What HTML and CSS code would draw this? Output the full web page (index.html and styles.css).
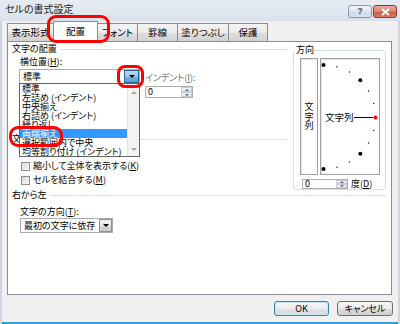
FILE: index.html
```html
<!DOCTYPE html>
<html lang="ja">
<head>
<meta charset="utf-8">
<title>セルの書式設定</title>
<link rel="stylesheet" href="styles.css">
</head>
<body>
<div class="window">
  <div class="titlebar">
    <span class="title">セルの書式設定</span>
    <div class="caps">
      <span class="cap help">?</span>
      <span class="cap close"><svg width="11" height="8" viewBox="0 0 11 8"><path d="M2 1 L9 7 M9 1 L2 7" stroke="#fff" stroke-width="2"/></svg></span>
    </div>
  </div>
  <div class="tabs">
    <div class="tab t1">表示形式</div>
    <div class="tab t2 active">配置</div>
    <div class="tab t3">フォント</div>
    <div class="tab t4">罫線</div>
    <div class="tab t5">塗りつぶし</div>
    <div class="tab t6">保護</div>
  </div>
  <div class="panel">
    <div class="cols">
      <div class="left">
        <div class="ghead"><span>文字の配置</span></div>
        <div class="flabel">横位置(<u>H</u>):</div>
        <div class="row1">
          <div class="combo c1"><span class="ctext">標準</span><span class="cbtn hot"><i class="arrow"></i></span></div>
          <div class="indent">
            <div class="dlabel">インデント(<u>I</u>):</div>
            <div class="spin s1"><span class="sval">0</span><span class="sbtns"><i class="up"></i><i class="dn"></i></span></div>
          </div>
        </div>
        <div class="ghead g2"><span>文字の制御</span></div>
        <label class="check k1"><i class="box"></i>縮小して全体を表示する(<u>K</u>)</label>
        <label class="check k2"><i class="box"></i>セルを結合する(<u>M</u>)</label>
      </div>
      <div class="orient">
        <div class="otitle">方向</div>
        <div class="obody">
          <div class="vbox"><span>文</span><span>字</span><span>列</span></div>
          <div class="dial">
            <svg width="58" height="115" viewBox="0 0 58 115">
              <g fill="#000">
                <circle cx="2.5" cy="6" r="2"/>
                <rect x="15.4" y="7.2" width="1.2" height="1.2"/>
                <rect x="27.9" y="12.4" width="1.2" height="1.2"/>
                <circle cx="39.3" cy="21.2" r="2"/>
                <rect x="46.9" y="31.4" width="1.2" height="1.2"/>
                <rect x="52.1" y="43.9" width="1.2" height="1.2"/>
                <rect x="52.1" y="70.9" width="1.2" height="1.2"/>
                <rect x="46.9" y="83.4" width="1.2" height="1.2"/>
                <circle cx="39.3" cy="94.8" r="2"/>
                <rect x="27.9" y="102.4" width="1.2" height="1.2"/>
                <rect x="15.4" y="107.6" width="1.2" height="1.2"/>
                <circle cx="2.5" cy="110" r="2"/>
              </g>
              <text x="4" y="61.5" class="dialtext">文字列</text>
              <line x1="33" y1="58.5" x2="52" y2="58.5" stroke="#000" stroke-width="1"/>
              <circle cx="54.5" cy="58.5" r="2" fill="#f00"/>
            </svg>
          </div>
        </div>
        <div class="orow">
          <div class="spin s2"><span class="sval">0</span><span class="sbtns"><i class="up"></i><i class="dn"></i></span></div>
          <span class="deg">度(<u>D</u>)</span>
        </div>
      </div>
    </div>
    <div class="ghead g3"><span>右から左</span></div>
    <div class="flabel f2">文字の方向(<u>T</u>):</div>
    <div class="combo c2"><span class="ctext">最初の文字に依存</span><span class="cbtn"><i class="arrow"></i></span></div>
  </div>
  <div class="footer">
    <button class="btn ok">OK</button>
    <button class="btn cancel">キャンセル</button>
  </div>

  <div class="droplist">
    <div class="litems">
      <div class="li">標準</div>
      <div class="li">左詰め (インデント)</div>
      <div class="li">中央揃え</div>
      <div class="li">右詰め (インデント)</div>
      <div class="li">繰り返し</div>
      <div class="li sel">両端揃え</div>
      <div class="li">選択範囲内で中央</div>
      <div class="li">均等割り付け (インデント)</div>
    </div>
    <div class="lsb"><i class="sup"></i><i class="sdn"></i></div>
  </div>

  <div class="mark m1"></div>
  <div class="mark m2"></div>
  <div class="mark m3"></div>
</div>
</body>
</html>
```

FILE: styles.css
```css
* { box-sizing: border-box; margin: 0; padding: 0; }
html, body { width: 400px; height: 324px; overflow: hidden; }
body {
  font-family: "Noto Sans CJK JP", "Noto Sans", sans-serif;
  font-size: 9px;
  font-feature-settings: "palt";
  color: #000;
  background: #f0f0f0;
}
u { text-decoration-thickness: 1px; text-underline-offset: 1px; }

.window {
  position: relative;
  width: 400px;
  height: 324px;
  display: flex;
  flex-direction: column;
  padding: 0 2px 2px;
  background: #f0f0f0;
  box-shadow: inset 2px 0 #cdd5de, inset -2px 0 #cdd5de, inset 0 -2px #3a9ad9;
}

/* title bar */
.titlebar {
  flex: none;
  height: 21px;
  margin: 0 -2px;
  padding: 3px 3px 0 5px;
  display: flex;
  justify-content: space-between;
  align-items: flex-start;
  background: linear-gradient(#e6ecf3, #d9e2ec);
}
.title { font-size: 10px; line-height: 12px; color: #1e1e1e; }
.caps { display: flex; gap: 1px; margin-top: 2px; }
.cap { width: 24px; height: 13px; border: 1px solid; border-radius: 3px; }
.help {
  border-color: #8694a8;
  background: linear-gradient(#f3f6fa, #dde5ef 50%, #cbd7e6 51%, #d9e3ef);
  color: #3b4b62;
  font-family: "Liberation Sans", sans-serif;
  font-weight: bold;
  font-size: 9px;
  line-height: 11px;
  text-align: center;
}
.close {
  border-color: #8c3a30;
  background: linear-gradient(#eaa99e, #d98471 50%, #c55a44 51%, #d47d66);
  display: flex;
  align-items: center;
  justify-content: center;
}

/* tabs */
.tabs {
  flex: none;
  height: 20px;
  display: flex;
  align-items: flex-end;
  padding-left: 5px;
  position: relative;
  z-index: 2;
}
.tab {
  height: 18px;
  border: 1px solid #898c95;
  border-bottom: none;
  margin-right: -1px;
  text-align: center;
  line-height: 16px;
  font-size: 9.5px;
  white-space: nowrap;
  background: linear-gradient(#f4f4f4, #ebebeb 50%, #dedede 51%, #d3d3d3);
}
.t1 { width: 47px; }
.t2 { width: 45px; }
.t3 { width: 41px; }
.t4 { width: 41px; }
.t5 { width: 52px; }
.t6 { width: 40px; }
.tab.active {
  height: 21px;
  margin-bottom: -1px;
  line-height: 18px;
  background: #fff;
  position: relative;
  z-index: 1;
}

/* panel */
.panel {
  flex: none;
  height: 254px;
  margin: 0 6px 0 5px;
  border: 1px solid #898c95;
  background: #fff;
  padding: 2px 5px 0 4px;
}
.cols {
  display: grid;
  grid-template-columns: 275px 93px;
  column-gap: 6px;
  align-items: start;
}
.ghead {
  display: flex;
  align-items: center;
  gap: 3px;
  height: 10px;
  line-height: 10px;
  white-space: nowrap;
}
.ghead::after {
  content: "";
  flex: 1;
  height: 0;
  border-top: 1px solid #d5dfe5;
}
.flabel { margin: 3px 0 0 8px; height: 10px; line-height: 10px; white-space: nowrap; }
.row1 { display: flex; margin-top: 2px; }

.combo {
  display: flex;
  height: 15px;
  border: 1px solid #abadb3;
  background: #fff;
}
.c1 { width: 121px; margin-left: 7px; }
.ctext { flex: 1; padding-left: 3px; line-height: 13px; white-space: nowrap; }
.cbtn {
  width: 14px;
  display: flex;
  align-items: center;
  justify-content: center;
  border: 1px solid #8e8f8f;
  background: linear-gradient(#f4f4f4, #e6e6e6 50%, #d6d6d6 51%, #cfcfcf);
}
.cbtn.hot {
  width: 15px;
  border-color: #2c628b;
  background: linear-gradient(#b9dcf4, #94c8ee 50%, #6cb1e4 51%, #5aa2d8);
}
.arrow {
  width: 0;
  height: 0;
  border-left: 3px solid transparent;
  border-right: 3px solid transparent;
  border-top: 3px solid #000;
}

.indent { margin-left: 5px; padding-top: 4px; display: flex; flex-direction: column; gap: 3px; }
.dlabel { height: 10px; line-height: 10px; color: #6d6d6d; white-space: nowrap; }

.spin {
  display: flex;
  height: 12px;
  border: 1px solid #abadb3;
  background: #fff;
}
.s1 { width: 48px; }
.sval { flex: 1; padding-left: 2px; line-height: 10px; }
.sbtns {
  width: 11px;
  display: flex;
  flex-direction: column;
}
.sbtns i {
  flex: 1;
  display: flex;
  align-items: center;
  justify-content: center;
  border: 1px solid #c9ccd2;
  background: linear-gradient(#f6f6f6, #e4e4e4);
}
.sbtns i::before {
  content: "";
  width: 0;
  height: 0;
  border-left: 2px solid transparent;
  border-right: 2px solid transparent;
}
.sbtns .up::before { border-bottom: 2px solid #4d6da0; }
.sbtns .dn::before { border-top: 2px solid #4d6da0; }

.g2 { margin-top: 36px; }
.check {
  display: flex;
  align-items: center;
  height: 10px;
  line-height: 10px;
  margin-left: 9px;
  white-space: nowrap;
}
.k1 { margin-top: 17px; }
.k2 { margin-top: 4px; }
.box {
  flex: none;
  width: 9px;
  height: 9px;
  margin-right: 3px;
  border: 1px solid #8e8f8f;
  background: linear-gradient(135deg, #d8d8d8, #f8f8f8);
}

/* orientation */
.orient {
  margin-top: 6px;
  border: 1px solid #d5dfe5;
  border-radius: 3px;
  padding: 0 5px 0 6px;
}
.otitle {
  margin: -6px 0 0 -5px;
  width: fit-content;
  padding: 0 1px;
  background: #fff;
  height: 10px;
  line-height: 10px;
}
.obody { display: flex; gap: 2px; margin-top: 3px; height: 117px; }
.vbox {
  width: 18px;
  border: 1px solid #a0a0a0;
  box-shadow: inset 1px 1px 0 #e6e6e6;
  display: flex;
  flex-direction: column;
  align-items: center;
  justify-content: center;
  font-size: 9px;
  line-height: 9.5px;
}
.dial {
  width: 60px;
  border: 1px solid #a0a0a0;
  box-shadow: inset 1px 1px 0 #e6e6e6;
}
.dial svg { display: block; }
.dialtext { font-family: "Noto Sans CJK JP", sans-serif; font-size: 9.5px; font-feature-settings: "palt"; }
.orow { display: flex; align-items: center; margin-top: 4px; height: 10px; }
.s2 { width: 46px; height: 10px; margin-left: 2px; }
.s2 .sval { line-height: 8px; }
.deg { margin-left: 3px; white-space: nowrap; line-height: 10px; }

.g3 { margin-top: 0; }
.f2 { margin-top: 7px; }
.c2 { width: 93px; margin: 1px 0 0 8px; }
.c2 .cbtn { width: 13px; }

/* footer */
.footer {
  flex: none;
  display: flex;
  justify-content: flex-end;
  gap: 8px;
  padding: 6px 5px 0 0;
}
.btn {
  height: 15px;
  padding: 0;
  border-radius: 3px;
  font: inherit;
  font-size: 9px;
  line-height: 13px;
  color: #000;
  text-align: center;
}
.ok {
  width: 55px;
  border: 1px solid #3c7fb1;
  box-shadow: inset 0 0 0 1px #c6e6f8;
  background: linear-gradient(#f6f6f6, #ededed 50%, #e2e2e2 51%, #dadada);
}
.cancel {
  width: 56px;
  border: 1px solid #707070;
  background: linear-gradient(#f4f4f4, #ebebeb 50%, #dddddd 51%, #cfcfcf);
}

/* open dropdown list (overlay) */
.droplist {
  position: absolute;
  left: 19px;
  top: 83px;
  width: 121px;
  height: 74px;
  border: 1px solid #646464;
  background: #fff;
  display: flex;
  z-index: 5;
}
.litems { flex: 1; min-width: 0; }
.li {
  height: 9px;
  line-height: 9px;
  padding-left: 2px;
  white-space: nowrap;
}
.li.sel { background: #3399ff; color: #fff; }
.lsb {
  width: 12px;
  flex: none;
  background: #f3f3f3;
  border-left: 1px solid #e4e4e4;
  display: flex;
  flex-direction: column;
  align-items: center;
  justify-content: space-between;
  padding: 7px 0 5px;
}
.lsb i {
  width: 0;
  height: 0;
  border-left: 3px solid transparent;
  border-right: 3px solid transparent;
}
.lsb .sup { border-bottom: 3px solid #a6a6a6; }
.lsb .sdn { border-top: 3px solid #a6a6a6; }

/* red annotation marks */
.mark {
  position: absolute;
  border: 3px solid #f00;
  z-index: 10;
}
.m1 { left: 47px; top: 15px; width: 63px; height: 28px; border-radius: 9px; }
.m2 { left: 117px; top: 65px; width: 27px; height: 23px; border-radius: 8px; }
.m3 { left: 9px; top: 126px; width: 54px; height: 21px; border-radius: 9px; }
```
